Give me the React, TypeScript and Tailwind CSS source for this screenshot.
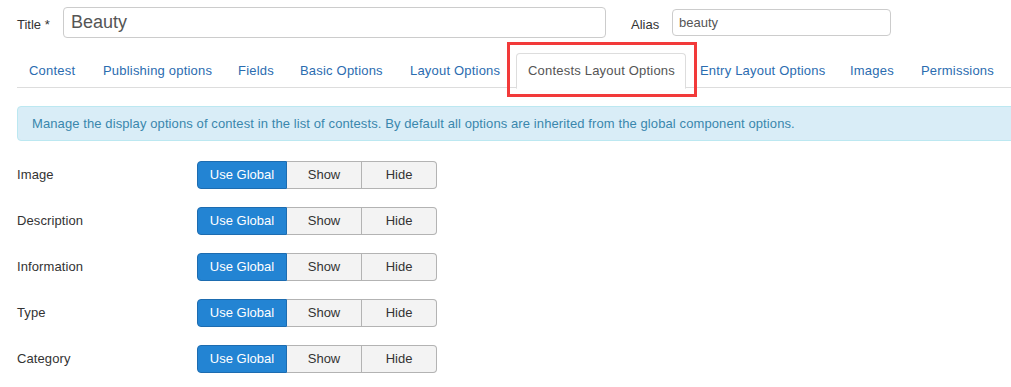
import React from "react";

const tabs = [
  { t: "Contest", w: "w-[72px]" },
  { t: "Publishing options", w: "w-[133px]" },
  { t: "Fields", w: "w-[60px]" },
  { t: "Basic Options", w: "w-[108px]" },
  { t: "Layout Options", w: "w-[116px]" },
  { t: "Contests Layout Options", w: "w-[170px]" },
  { t: "Entry Layout Options", w: "w-[148px]" },
  { t: "Images", w: "w-[69px]" },
  { t: "Permissions", w: "w-[100px]" },
];

const rows = ["Image", "Description", "Information", "Type", "Category"];

function Toggle() {
  return (
    <div className="flex h-[28px] text-[13px]">
      <button className="w-[90px] rounded-l-[4px] border border-[#1d6cb0] bg-[#2384d3] text-white">
        Use Global
      </button>
      <button className="w-[75px] border-y border-r border-[#b3b3b3] bg-[#f3f3f3] text-[#333]">
        Show
      </button>
      <button className="w-[75px] rounded-r-[4px] border-y border-r border-[#b3b3b3] bg-[#f3f3f3] text-[#333]">
        Hide
      </button>
    </div>
  );
}

export default function App() {
  return (
    <div className="h-[387px] w-[1011px] overflow-hidden bg-white font-['Liberation_Sans',Arial,sans-serif] text-[13px] text-[#333]">
      <div className="w-[1040px] pl-[17px] pt-[7px]">
        {/* Title / alias */}
        <div className="flex items-start">
          <label className="mt-[8px] w-[46px]">Title *</label>
          <div className="flex h-[31px] w-[543px] items-center rounded-[4px] border border-[#ccc] px-[7px] text-[18px] text-[#555]">
            Beauty
          </div>
          <label className="ml-[25px] mt-[8px] w-[41px]">Alias</label>
          <div className="mt-[2px] flex h-[27px] w-[219px] items-center rounded-[4px] border border-[#ccc] px-[6px] text-[13px] text-[#555]">
            beauty
          </div>
        </div>

        {/* Tabs */}
        <div className="mt-[15px] flex h-[35px] border-b border-[#ddd] tracking-[0.2px]">
          {tabs.map(({ t, w }) =>
            t === "Contests Layout Options" ? (
              <div key={t} className={`relative mr-[2px] ${w}`}>
                <div className="-mb-px h-[36px] rounded-t-[4px] border border-b-white border-[#ddd] bg-white pl-[11px] pt-[8px] leading-[18px] text-[#555]">
                  {t}
                </div>
                <div className="pointer-events-none absolute -bottom-[10px] -left-[9px] -right-[11px] -top-[11px] border-[3px] border-[#f23a3a]" />
              </div>
            ) : (
              <div key={t} className={`mr-[2px] shrink-0 pl-[12px] pt-[9px] leading-[18px] text-[#2b6cb0] ${w}`}>
                {t}
              </div>
            )
          )}
        </div>

        {/* Alert */}
        <div className="mt-[18px] h-[35px] rounded-l-[4px] border border-[#bce8f1] bg-[#d9edf7] pl-[14px] pt-[8px] leading-[18px] tracking-[0.1px] text-[#3a87ad]">
          Manage the display options of contest in the list of contests. By default all options are inherited from the global component options.
        </div>

        {/* Options */}
        <div className="mt-[20px] flex flex-col gap-[18px]">
          {rows.map((r) => (
            <div key={r} className="flex items-center">
              <div className="w-[180px] tracking-[0.1px]">{r}</div>
              <Toggle />
            </div>
          ))}
        </div>
      </div>
    </div>
  );
}
